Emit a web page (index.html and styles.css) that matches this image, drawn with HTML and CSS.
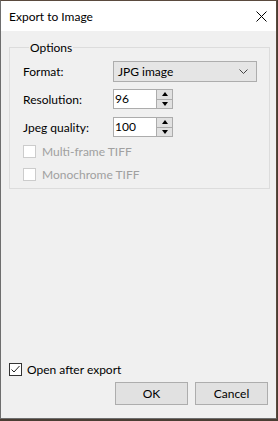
FILE: index.html
```html
<!DOCTYPE html>
<html lang="en">
<head>
  <meta charset="UTF-8">
  <title>Export to Image</title>
  <link rel="stylesheet" href="styles.css">
</head>
<body>

  <div class="dialog">
    <!-- Title bar -->
    <div class="titlebar">
      <span class="title">Export to Image</span>
      <span class="close">
        <svg width="11" height="11" viewBox="0 0 11 11">
          <path d="M0.5 0.5 L10.5 10.5 M10.5 0.5 L0.5 10.5" stroke="#000" stroke-width="1" fill="none"/>
        </svg>
      </span>
    </div>

    <div class="content">
      <fieldset class="group">
        <legend>Options</legend>

        <div class="row row-format">
          <label>Format:</label>
          <div class="combo">
            <span>JPG image</span>
            <svg width="9" height="5" viewBox="0 0 9 5">
              <path d="M0.5 0.5 L4.5 4.5 L8.5 0.5" stroke="#444" fill="none"/>
            </svg>
          </div>
        </div>

        <div class="row row-spin">
          <label>Resolution:</label>
          <div class="spin">
            <span class="spin-value">96</span>
            <span class="spin-btns">
              <span class="spin-btn"><i class="arrow-up"></i></span>
              <span class="spin-btn"><i class="arrow-down"></i></span>
            </span>
          </div>
        </div>

        <div class="row row-spin second">
          <label>Jpeg quality:</label>
          <div class="spin">
            <span class="spin-value">100</span>
            <span class="spin-btns">
              <span class="spin-btn"><i class="arrow-up"></i></span>
              <span class="spin-btn"><i class="arrow-down"></i></span>
            </span>
          </div>
        </div>

        <div class="check disabled first">
          <span class="box"></span>
          <span>Multi-frame TIFF</span>
        </div>
        <div class="check disabled">
          <span class="box"></span>
          <span>Monochrome TIFF</span>
        </div>
      </fieldset>

      <div class="spacer"></div>

      <div class="check open-after">
        <span class="box">
          <svg width="11" height="11" viewBox="0 0 11 11">
            <path d="M1.5 5.5 L4 8 L9.5 2" stroke="#222" stroke-width="1" fill="none"/>
          </svg>
        </span>
        <span>Open after export</span>
      </div>

      <div class="buttons">
        <button>OK</button>
        <button>Cancel</button>
      </div>
    </div>
  </div>

</body>
</html>
```

FILE: styles.css
```css
html, body {
  margin: 0;
  padding: 0;
}
body {
  background: #4a3d33;
  width: 278px;
  height: 421px;
  font-family: Lato, 'Liberation Sans', sans-serif;
  font-size: 12px;
  color: #000;
}
.dialog {
  width: 277px;
  height: 419px;
  box-sizing: border-box;
  border: 1px solid #6e6e6e;
  border-top-color: #5a4a3e;
  border-right-color: #5a4a3e;
  background: #f0f0f0;
  display: flex;
  flex-direction: column;
}
.titlebar {
  height: 30px;
  background: #fff;
  display: flex;
  align-items: center;
  justify-content: space-between;
  padding: 0 9px 0 8px;
  flex-shrink: 0;
}
.title {
  font-size: 12px;
  padding-top: 1px;
}
.close {
  display: flex;
  padding-top: 1px;
}
.content {
  flex: 1;
  display: flex;
  flex-direction: column;
  padding: 9px 6px 13px 8px;
}
.group {
  margin: 0;
  padding: 0 0 6px 13px;
  border: 1px solid #dcdcdc;
  min-width: 0;
}
.group legend {
  margin-left: 6px;
  padding: 0 1px;
  line-height: 15px;
}
.row {
  display: flex;
  align-items: center;
}
.row label {
  width: 90px;
}
.row-format {
  margin-top: 6px;
}
.row-spin {
  margin-top: 7px;
}
.row-spin.second {
  margin-top: 8px;
}
.combo {
  width: 144px;
  height: 21px;
  box-sizing: border-box;
  border: 1px solid #adadad;
  background: #e5e5e5;
  display: flex;
  align-items: center;
  justify-content: space-between;
  padding: 0 8px 0 4px;
}
.spin {
  width: 60px;
  height: 20px;
  box-sizing: border-box;
  border: 1px solid #acacac;
  background: #fff;
  display: flex;
}
.spin-value {
  flex: 1;
  padding-left: 1px;
  line-height: 18px;
}
.spin-btns {
  width: 15px;
  display: flex;
  flex-direction: column;
  border-left: 1px solid #acacac;
}
.spin-btn {
  flex: 1;
  background: #e1e1e1;
  display: flex;
  align-items: center;
  justify-content: center;
}
.spin-btn + .spin-btn {
  border-top: 1px solid #acacac;
}
.arrow-up,
.arrow-down {
  width: 0;
  height: 0;
  border-left: 3.5px solid transparent;
  border-right: 3.5px solid transparent;
}
.arrow-up {
  border-bottom: 4px solid #000;
}
.arrow-down {
  border-top: 4px solid #000;
}
.check {
  display: flex;
  align-items: center;
  gap: 6px;
  height: 15px;
  margin-top: 8px;
}
.check.first {
  margin-top: 7px;
}
.check .box {
  width: 13px;
  height: 13px;
  box-sizing: border-box;
  border: 1px solid #333;
  background: #fff;
  display: flex;
  align-items: center;
  justify-content: center;
}
.check.disabled {
  color: #a0a0a0;
}
.check.disabled .box {
  border-color: #cccccc;
}
.spacer {
  flex: 1;
}
.open-after {
  margin: 0 0 5px 0;
  gap: 5px;
}
.buttons {
  display: flex;
  justify-content: flex-end;
  gap: 7px;
  margin-right: 2px;
}
button {
  width: 73px;
  height: 23px;
  border: 1px solid #adadad;
  background: #e1e1e1;
  font-family: inherit;
  font-size: 12px;
  color: #000;
  padding: 0;
}
```
